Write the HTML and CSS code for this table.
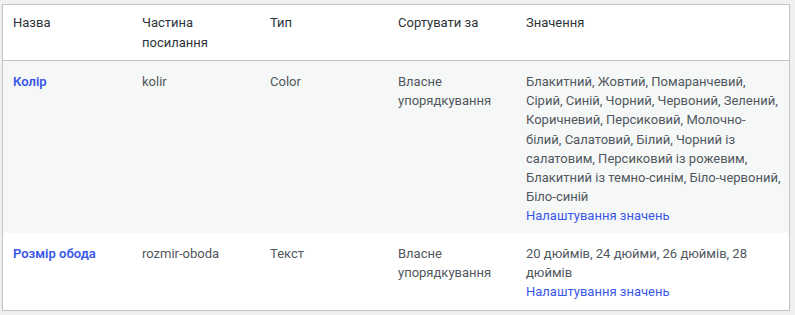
FILE: index.html
```html
<!DOCTYPE html>
<html lang="uk">
<head>
<meta charset="utf-8">
<link rel="stylesheet" href="styles.css">
</head>
<body>
<table class="attrs">
  <colgroup>
    <col class="c-name"><col class="c-slug"><col class="c-type"><col class="c-order"><col class="c-terms">
  </colgroup>
  <thead>
    <tr>
      <th>Назва</th>
      <th>Частина посилання</th>
      <th>Тип</th>
      <th>Сортувати за</th>
      <th>Значення</th>
    </tr>
  </thead>
  <tbody>
    <tr class="alt">
      <td><a class="name" href="#">Колір</a></td>
      <td>kolir</td>
      <td>Color</td>
      <td>Власне упорядкування</td>
      <td class="terms">Блакитний, Жовтий, Помаранчевий,<br>Сірий, Синій, Чорний, Червоний, Зелений,<br>Коричневий, Персиковий, Молочно-<br>білий, Салатовий, Білий, Чорний із<br>салатовим, Персиковий із рожевим,<br>Блакитний із темно-синім, Біло-червоний,<br>Біло-синій<br><a class="cfg" href="#">Налаштування значень</a></td>
    </tr>
    <tr>
      <td><a class="name" href="#">Розмір обода</a></td>
      <td>rozmir-oboda</td>
      <td>Текст</td>
      <td>Власне упорядкування</td>
      <td class="terms">20 дюймів, 24 дюйми, 26 дюймів, 28<br>дюймів<br><a class="cfg" href="#">Налаштування значень</a></td>
    </tr>
  </tbody>
</table>
</body>
</html>
```

FILE: styles.css
```css
html, body {
  margin: 0;
  background: #f0f0f1;
}
body {
  padding: 4px 5px 0 2px;
  font-family: Roboto, "Open Sans", sans-serif;
  font-size: 13px;
  color: #50575e;
}
.attrs {
  width: 100%;
  table-layout: fixed;
  border-spacing: 0;
  border: 1px solid #c3c4c7;
  background: #fff;
  box-shadow: 0 1px 1px rgba(0,0,0,.04);
}
.c-name { width: 129px; }
.c-slug, .c-type, .c-order { width: 128px; }
.attrs th {
  text-align: left;
  font-weight: 400;
  color: #2c3338;
  padding: 8px 10px;
  line-height: 19.5px;
  vertical-align: top;
  border-bottom: 1px solid #c3c4c7;
}
.attrs td {
  padding: 11px 10px 7px;
  line-height: 19.2px;
  vertical-align: top;
}
.attrs tr:last-child td {
  padding-bottom: 9px;
}
.attrs td.terms {
  white-space: nowrap;
  padding-right: 2px;
}
.attrs tr.alt td {
  background: #f6f7f7;
}
.attrs a {
  color: #3858e9;
  text-decoration: none;
}
.attrs a.name {
  font-weight: 600;
}
```
